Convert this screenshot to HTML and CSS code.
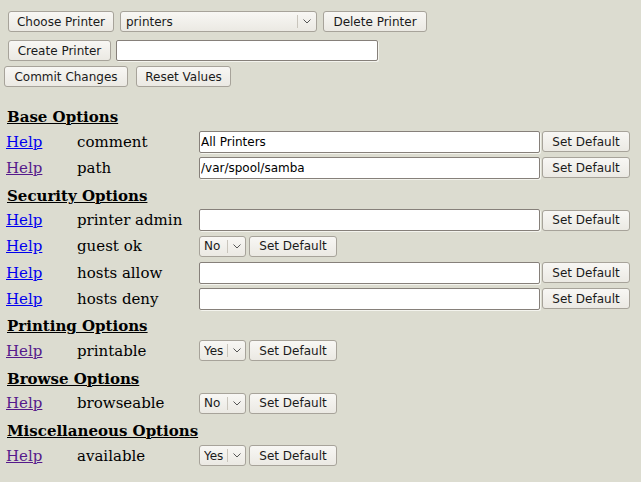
FILE: index.html
```html
<!DOCTYPE html>
<html>
<head>
<meta charset="utf-8">
<title>SWAT Printers</title>
<link rel="stylesheet" href="styles.css">
</head>
<body>
<form class="page">
  <div class="top">
    <div class="bar bar1">
      <button type="button" class="btn w-choose">Choose Printer</button>
      <span class="sel sel-printers">
        <select><option>printers</option></select>
        <span class="sep"></span>
        <svg class="chev" width="8" height="5" viewBox="0 0 8 5"><path d="M0.5 0.5 L4 4 L7.5 0.5" fill="none" stroke="#555" stroke-width="1"/></svg>
      </span>
      <button type="button" class="btn w-delete">Delete Printer</button>
    </div>
    <div class="bar bar2">
      <button type="button" class="btn w-create">Create Printer</button>
      <input type="text" class="txt w-new">
    </div>
    <div class="bar bar3">
      <button type="button" class="btn w-commit">Commit Changes</button>
      <button type="button" class="btn w-reset">Reset Values</button>
    </div>
  </div>

  <div class="opts">
    <div class="head">Base Options</div>
    <a class="help" href="#">Help</a><span class="lbl">comment</span>
    <span class="val"><input type="text" class="txt w-long" value="All Printers"><button type="button" class="btn w-def">Set Default</button></span>
    <a class="help visited" href="#">Help</a><span class="lbl">path</span>
    <span class="val"><input type="text" class="txt w-long" value="/var/spool/samba"><button type="button" class="btn w-def">Set Default</button></span>

    <div class="head">Security Options</div>
    <a class="help" href="#">Help</a><span class="lbl">printer admin</span>
    <span class="val"><input type="text" class="txt w-long"><button type="button" class="btn w-def">Set Default</button></span>
    <a class="help" href="#">Help</a><span class="lbl">guest ok</span>
    <span class="val"><span class="sel sel-small"><select><option>No</option><option>Yes</option></select><span class="sep"></span><svg class="chev" width="8" height="5" viewBox="0 0 8 5"><path d="M0.5 0.5 L4 4 L7.5 0.5" fill="none" stroke="#555" stroke-width="1"/></svg></span><button type="button" class="btn w-def gap">Set Default</button></span>
    <a class="help" href="#">Help</a><span class="lbl">hosts allow</span>
    <span class="val"><input type="text" class="txt w-long"><button type="button" class="btn w-def">Set Default</button></span>
    <a class="help" href="#">Help</a><span class="lbl">hosts deny</span>
    <span class="val"><input type="text" class="txt w-long"><button type="button" class="btn w-def">Set Default</button></span>

    <div class="head">Printing Options</div>
    <a class="help visited" href="#">Help</a><span class="lbl">printable</span>
    <span class="val"><span class="sel sel-small"><select><option>Yes</option><option>No</option></select><span class="sep"></span><svg class="chev" width="8" height="5" viewBox="0 0 8 5"><path d="M0.5 0.5 L4 4 L7.5 0.5" fill="none" stroke="#555" stroke-width="1"/></svg></span><button type="button" class="btn w-def gap">Set Default</button></span>

    <div class="head">Browse Options</div>
    <a class="help visited" href="#">Help</a><span class="lbl">browseable</span>
    <span class="val"><span class="sel sel-small"><select><option>No</option><option>Yes</option></select><span class="sep"></span><svg class="chev" width="8" height="5" viewBox="0 0 8 5"><path d="M0.5 0.5 L4 4 L7.5 0.5" fill="none" stroke="#555" stroke-width="1"/></svg></span><button type="button" class="btn w-def gap">Set Default</button></span>

    <div class="head">Miscellaneous Options</div>
    <a class="help visited" href="#">Help</a><span class="lbl">available</span>
    <span class="val"><span class="sel sel-small"><select><option>Yes</option><option>No</option></select><span class="sep"></span><svg class="chev" width="8" height="5" viewBox="0 0 8 5"><path d="M0.5 0.5 L4 4 L7.5 0.5" fill="none" stroke="#555" stroke-width="1"/></svg></span><button type="button" class="btn w-def gap">Set Default</button></span>
  </div>
</form>
</body>
</html>
```

FILE: styles.css
```css
html, body {
  margin: 0;
  padding: 0;
  background: #dcdcd0;
}
body {
  width: 641px;
  height: 482px;
  overflow: hidden;
  font-family: "DejaVu Serif", serif;
  font-size: 15px;
  color: #000;
}
.page {
  margin: 0;
}
.top {
  display: flex;
  flex-direction: column;
  padding-top: 11px;
}
.bar {
  display: flex;
  align-items: center;
  height: 21px;
}
.bar1 { padding-left: 8px; gap: 6px; }
.bar2 { padding-left: 8px; gap: 5px; margin-top: 8px; }
.bar3 { padding-left: 4px; gap: 8px; margin-top: 5px; }

.btn {
  box-sizing: border-box;
  height: 21px;
  margin: 0;
  padding: 0;
  font-family: "DejaVu Sans", sans-serif;
  font-size: 12px;
  color: #1a1a1a;
  background: linear-gradient(#f8f7f4, #ebe9e3);
  border: 1px solid #a7a39a;
  border-radius: 3px;
  text-align: center;
}
.w-choose { width: 106px; }
.w-delete { width: 104px; }
.w-create { width: 103px; }
.w-commit { width: 124px; }
.w-reset { width: 95px; }
.w-def { width: 88px; }

.txt {
  box-sizing: border-box;
  height: 21px;
  margin: 0;
  padding: 0 2px 0 1px;
  font-family: "DejaVu Sans", sans-serif;
  font-size: 12px;
  color: #000;
  background: #fff;
  border: 1px solid #86807a;
  border-radius: 2px;
  box-shadow: 1px 1px 0 #f4f4ee;
}
.w-new { width: 262px; }
.w-long { width: 341px; height: 22px; }

.sel {
  position: relative;
  display: inline-block;
  height: 21px;
}
.sel select {
  box-sizing: border-box;
  -webkit-appearance: none;
  appearance: none;
  height: 21px;
  margin: 0;
  padding: 0 0 0 5px;
  font-family: "DejaVu Sans", sans-serif;
  font-size: 12px;
  color: #1a1a1a;
  background: linear-gradient(#f8f7f4, #ebe9e3);
  border: 1px solid #a7a39a;
  border-radius: 3px;
}
.sel-printers select { width: 197px; }
.sel-small select { width: 47px; padding-left: 4px; }
.sep {
  position: absolute;
  top: 4px;
  bottom: 4px;
  width: 1px;
  background: #c9c5bc;
}
.chev {
  position: absolute;
  top: 8px;
}
.sel-printers .sep { left: 177px; }
.sel-printers .chev { left: 183px; }
.sel-small .sep { left: 28px; }
.sel-small .chev { left: 34px; }

.opts {
  display: grid;
  grid-template-columns: 71px 122px 1fr;
  grid-auto-rows: 26.17px;
  align-items: center;
  margin-top: 15.5px;
  padding-left: 6px;
}
.head {
  grid-column: 1 / 4;
  font-weight: bold;
  text-decoration: underline;
  padding-left: 1px;
  padding-top: 3px;
}
.help {
  color: #0000ee;
  text-decoration: underline;
}
.help.visited { color: #551a8b; }
.lbl { white-space: nowrap; }
.val {
  display: flex;
  align-items: center;
  gap: 2px;
}
.val .gap { margin-left: 1px; }
```
